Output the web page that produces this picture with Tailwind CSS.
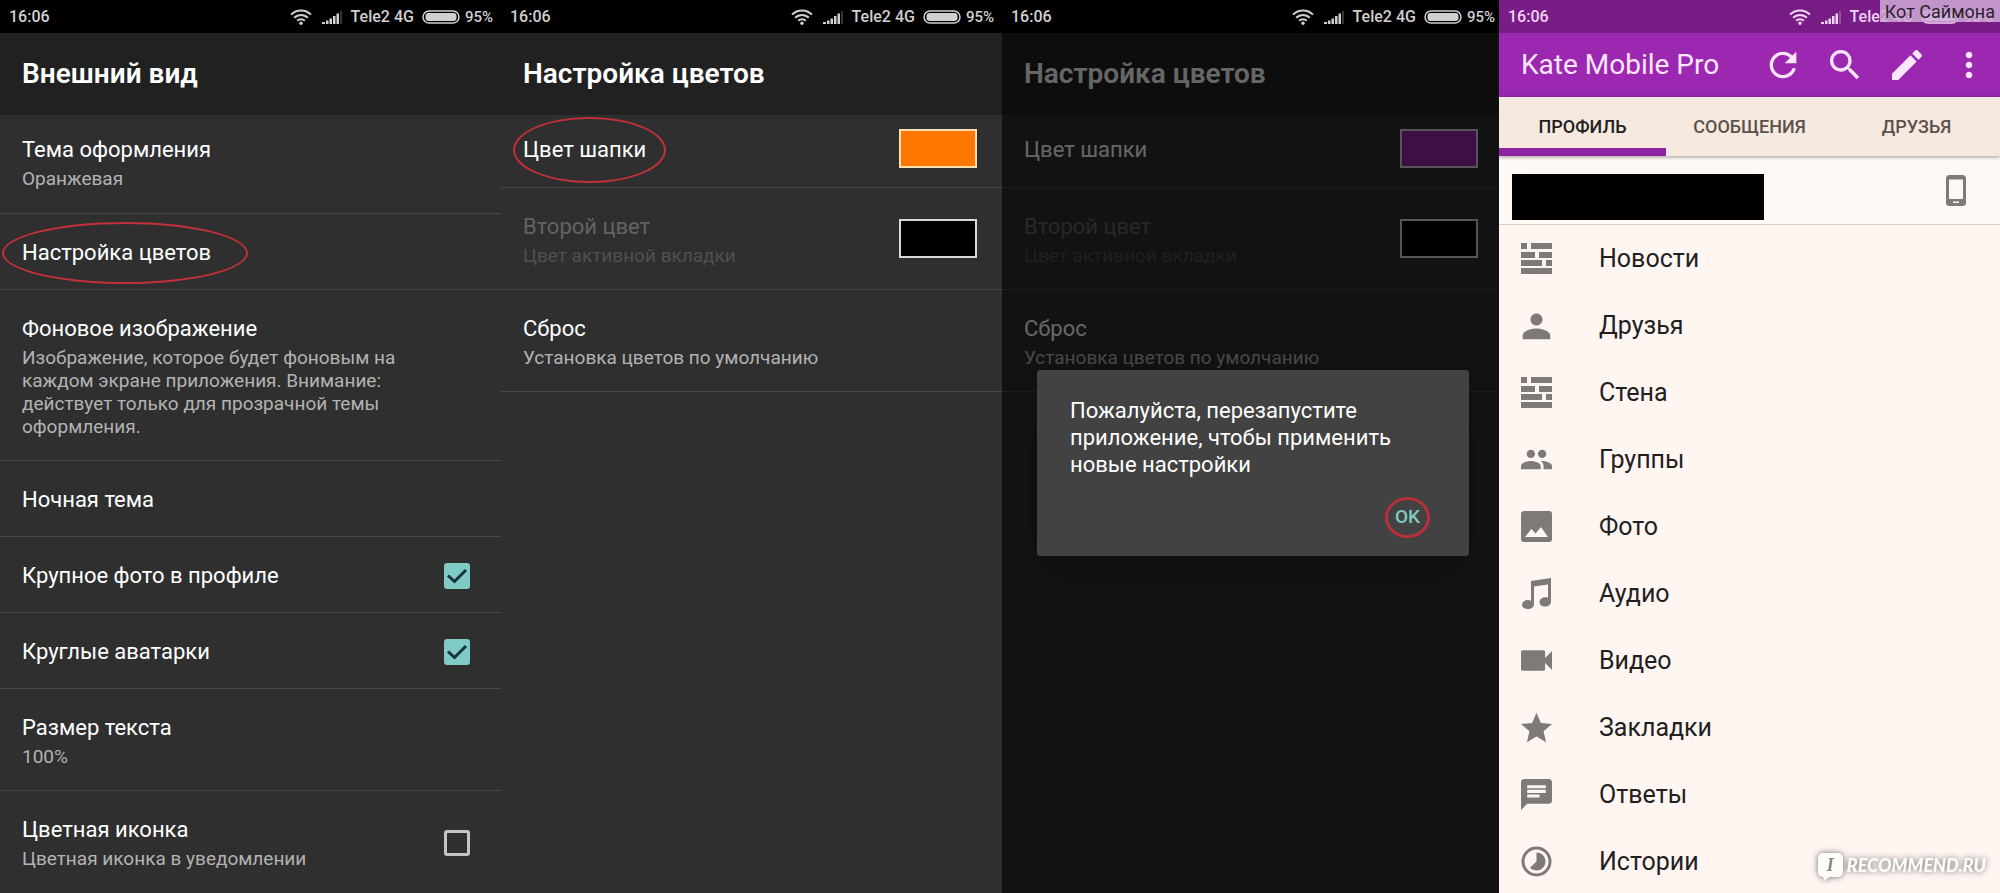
<!DOCTYPE html>
<html lang="ru">
<head>
  <meta charset="UTF-8" />
  <meta name="viewport" content="width=device-width, initial-scale=1" />
  <title>Kate Mobile Pro</title>
  <script src="https://cdn.jsdelivr.net/npm/@tailwindcss/browser@4"></script>
</head>
<body class="h-screen overflow-hidden bg-black font-[Roboto,sans-serif]">

<!-- shared icons -->
<svg class="hidden">
  <symbol id="wifi" viewBox="0 0 22 16">
    <g fill="none" stroke="currentColor" stroke-width="2">
      <path d="M1 5.6a14.2 14.2 0 0 1 20 0" />
      <path d="M4.2 8.8a9.6 9.6 0 0 1 13.6 0" />
      <path d="M7.2 11.8a5.4 5.4 0 0 1 7.6 0" />
    </g>
    <circle cx="11" cy="14.2" r="1.7" fill="currentColor" />
  </symbol>
  <symbol id="signal" viewBox="0 0 20 13">
    <g fill="currentColor">
      <path d="M0 11h3v2H0zM4 9.5h2.500V13H4zM7.500 7.500h2.500v5.500h-2.500zM11 5h2.500v8h-2.500zM14.500 2.500h2.500V13h-2.500z" />
      <path d="M18 0h2v13h-2z" opacity=".25" />
    </g>
  </symbol>
  <symbol id="battery" viewBox="0 0 38 14">
    <rect x="1" y="1" width="36" height="12" rx="6" fill="none" stroke="currentColor" stroke-width="1.500" />
    <rect x="3.500" y="3" width="31" height="8" rx="3" fill="currentColor" />
  </symbol>
  <symbol id="wall" viewBox="0 0 31 31">
    <path fill="currentColor" d="M0 0h6v6H0zM10 0h21v6H10zM0 9h14v6H0zM18 9h13v6H18zM0 17h21v6H0zM25 17h6v6h-6zM0 25h31v6H0z" />
  </symbol>
</svg>

<main class="grid h-full grid-cols-[501fr_501fr_497fr_501fr] text-white">

  <!-- appearance -->
  <section class="flex min-w-0 flex-col overflow-hidden bg-[#2f2f2f]">
    <div class="flex h-[33px] shrink-0 items-center bg-black pt-px pr-2 pl-[9px] text-base font-medium text-[#d0d0d0]">
      <span class="mr-auto">16:06</span>
      <svg class="mr-[10px] h-4 w-[22px]"><use href="#wifi" /></svg>
      <svg class="mr-[9px] h-[13px] w-5"><use href="#signal" /></svg>
      <span class="mr-2">Tele2 4G</span>
      <svg class="mr-[5px] h-[14px] w-[38px]"><use href="#battery" /></svg>
      <span class="text-[15px]">95%</span>
    </div>
    <header class="flex h-[82px] shrink-0 items-center bg-[#212121] px-[22px]">
      <h1 class="text-[28px] font-semibold">Внешний вид</h1>
    </header>
    <ul class="[&>li]:border-b [&>li]:border-[#484848] [&>li]:px-[22px] [&>li]:pt-[25px] [&>li]:pb-[22px] [&>li:last-child]:border-0">
      <li class="first:pt-[21px] first:pb-[23px]">
        <h2 class="text-[22px] leading-7">Тема оформления</h2>
        <p class="mt-[3px] text-[19px] leading-[23px] text-[#b3b3b3]">Оранжевая</p>
      </li>
      <li class="relative">
        <h2 class="text-[22px] leading-7">Настройка цветов</h2>
        <div class="absolute top-2 left-[2px] h-[62px] w-[246px] rounded-[50%] border-2 border-[#c3303a]"></div>
      </li>
      <li>
        <h2 class="text-[22px] leading-7">Фоновое изображение</h2>
        <p class="mt-[3px] max-w-[400px] text-[19px] leading-[23px] text-[#b3b3b3]">Изображение, которое будет фоновым на каждом экране приложения. Внимание: действует только для прозрачной темы оформления.</p>
      </li>
      <li>
        <h2 class="text-[22px] leading-7">Ночная тема</h2>
      </li>
      <li class="flex items-center justify-between">
        <label for="bigPhoto" class="text-[22px] leading-7">Крупное фото в профиле</label>
        <span class="relative mr-[9px] h-[26px] w-[26px]">
          <input type="checkbox" id="bigPhoto" checked class="block h-[26px] w-[26px] appearance-none rounded-[3px] border-2 border-[#c4c4c4] checked:border-[#80cbc4] checked:bg-[#80cbc4]">
          <svg class="pointer-events-none absolute inset-0" viewBox="0 0 26 26" fill="none" stroke="#17343a" stroke-width="3"><path d="M4 12.500l6.500 6L22 7" /></svg>
        </span>
      </li>
      <li class="flex items-center justify-between">
        <label for="roundAvatars" class="text-[22px] leading-7">Круглые аватарки</label>
        <span class="relative mr-[9px] h-[26px] w-[26px]">
          <input type="checkbox" id="roundAvatars" checked class="block h-[26px] w-[26px] appearance-none rounded-[3px] border-2 border-[#c4c4c4] checked:border-[#80cbc4] checked:bg-[#80cbc4]">
          <svg class="pointer-events-none absolute inset-0" viewBox="0 0 26 26" fill="none" stroke="#17343a" stroke-width="3"><path d="M4 12.500l6.500 6L22 7" /></svg>
        </span>
      </li>
      <li>
        <h2 class="text-[22px] leading-7">Размер текста</h2>
        <p class="mt-[3px] text-[19px] leading-[23px] text-[#b3b3b3]">100%</p>
      </li>
      <li class="flex items-center justify-between">
        <label for="colorIcon">
          <span class="block text-[22px] leading-7">Цветная иконка</span>
          <span class="mt-[3px] block text-[19px] leading-[23px] text-[#b3b3b3]">Цветная иконка в уведомлении</span>
        </label>
        <input type="checkbox" id="colorIcon" class="mr-[9px] block h-[26px] w-[26px] appearance-none rounded-[3px] border-[3px] border-[#c4c4c4] checked:bg-[#80cbc4]">
      </li>
    </ul>
  </section>

  <!-- colors -->
  <section class="flex min-w-0 flex-col overflow-hidden bg-[#2f2f2f]">
    <div class="flex h-[33px] shrink-0 items-center bg-black pt-px pr-2 pl-[9px] text-base font-medium text-[#d0d0d0]">
      <span class="mr-auto">16:06</span>
      <svg class="mr-[10px] h-4 w-[22px]"><use href="#wifi" /></svg>
      <svg class="mr-[9px] h-[13px] w-5"><use href="#signal" /></svg>
      <span class="mr-2">Tele2 4G</span>
      <svg class="mr-[5px] h-[14px] w-[38px]"><use href="#battery" /></svg>
      <span class="text-[15px]">95%</span>
    </div>
    <header class="flex h-[82px] shrink-0 items-center bg-[#212121] px-[22px]">
      <h1 class="text-[28px] font-semibold">Настройка цветов</h1>
    </header>
    <ul class="[&>li]:border-b [&>li]:border-[#484848] [&>li]:px-[22px] [&>li]:pt-[25px] [&>li]:pb-[22px]">
      <li class="relative flex items-center justify-between first:pt-[21px] first:pb-[23px]">
        <h2 class="text-[22px] leading-7">Цвет шапки</h2>
        <button type="button" aria-label="Цвет шапки" class="-mt-3 -mb-2 mr-[3px] h-[39px] w-[78px] border-2 border-[#ffe0b0] bg-[#ff7700]"></button>
        <div class="absolute top-[2px] left-3 h-[66px] w-[153px] rounded-[50%] border-2 border-[#c3303a]"></div>
      </li>
      <li class="flex items-center justify-between">
        <div>
          <h2 class="text-[22px] leading-7 text-[#636363]">Второй цвет</h2>
          <p class="mt-[3px] text-[19px] leading-[23px] text-[#505050]">Цвет активной вкладки</p>
        </div>
        <button type="button" aria-label="Второй цвет" class="mr-[3px] mb-1 h-[39px] w-[78px] border-2 border-[#d8d8d8] bg-black"></button>
      </li>
      <li>
        <h2 class="text-[22px] leading-7">Сброс</h2>
        <p class="mt-[3px] text-[19px] leading-[23px] text-[#b3b3b3]">Установка цветов по умолчанию</p>
      </li>
    </ul>
  </section>

  <!-- colors, restart dialog -->
  <section class="flex min-w-0 flex-col overflow-hidden bg-[#2f2f2f]">
    <div class="flex h-[33px] shrink-0 items-center bg-black pt-px pr-1 pl-[9px] text-base font-medium text-[#d0d0d0]">
      <span class="mr-auto">16:06</span>
      <svg class="mr-[10px] h-4 w-[22px]"><use href="#wifi" /></svg>
      <svg class="mr-[9px] h-[13px] w-5"><use href="#signal" /></svg>
      <span class="mr-2">Tele2 4G</span>
      <svg class="mr-[5px] h-[14px] w-[38px]"><use href="#battery" /></svg>
      <span class="text-[15px]">95%</span>
    </div>
    <div class="relative grow">
      <header class="flex h-[82px] items-center bg-[#212121] px-[22px]">
        <h1 class="text-[28px] font-semibold">Настройка цветов</h1>
      </header>
      <ul class="[&>li]:border-b [&>li]:border-[#484848] [&>li]:pt-[25px] [&>li]:pr-[18px] [&>li]:pb-[22px] [&>li]:pl-[22px]">
        <li class="flex items-center justify-between first:pt-[21px] first:pb-[23px]">
          <h2 class="text-[22px] leading-7">Цвет шапки</h2>
          <button type="button" aria-label="Цвет шапки" class="-mt-3 -mb-2 mr-[3px] h-[39px] w-[78px] border-2 border-[#d8d8d8] bg-[#9c27b0]"></button>
        </li>
        <li class="flex items-center justify-between">
          <div>
            <h2 class="text-[22px] leading-7 text-[#636363]">Второй цвет</h2>
            <p class="mt-[3px] text-[19px] leading-[23px] text-[#505050]">Цвет активной вкладки</p>
          </div>
          <button type="button" aria-label="Второй цвет" class="mr-[3px] mb-1 h-[39px] w-[78px] border-2 border-[#d8d8d8] bg-black"></button>
        </li>
        <li>
          <h2 class="text-[22px] leading-7">Сброс</h2>
          <p class="mt-[3px] text-[19px] leading-[23px] text-[#b3b3b3]">Установка цветов по умолчанию</p>
        </li>
      </ul>
      <div class="absolute inset-0 flex items-center bg-black/60 pr-[30px] pl-[35px]">
        <div role="dialog" class="w-full rounded-[3px] bg-[#424242] px-[33px] pt-[27px] pb-[18px] shadow-2xl">
          <p class="max-w-[340px] text-[22px] leading-[27px]">Пожалуйста, перезапустите приложение, чтобы применить новые настройки</p>
          <div class="mt-[19px] flex justify-end pr-[6px]">
            <button type="button" class="h-[41px] w-[45px] rounded-[50%] border-[3px] border-[#b8303a] text-[19px] font-medium text-[#80cbc4]">OK</button>
          </div>
        </div>
      </div>
    </div>
  </section>

  <!-- main screen -->
  <section class="relative flex min-w-0 flex-col overflow-hidden bg-[#fff6f2] text-[#22201e]">
    <div class="flex h-[33px] shrink-0 items-center bg-[#771d85] pt-px pr-2 pl-[9px] text-base font-medium text-[#f3d3f5]">
      <span class="mr-auto">16:06</span>
      <svg class="mr-[10px] h-4 w-[22px]"><use href="#wifi" /></svg>
      <svg class="mr-[9px] h-[13px] w-5"><use href="#signal" /></svg>
      <span class="mr-2">Tele2 4G</span>
      <svg class="mr-[5px] h-[14px] w-[38px]"><use href="#battery" /></svg>
      <span class="text-[15px]">95%</span>
    </div>
    <header class="flex h-16 shrink-0 items-center gap-[22px] bg-[#9c27b0] pr-[11px] pl-[22px] text-[#ffe6ff]">
      <h1 class="mr-auto text-[28px]">Kate Mobile Pro</h1>
      <button type="button" aria-label="Обновить" class="h-10 w-10">
        <svg viewBox="0 0 24 24" fill="currentColor"><path d="M17.650 6.350C16.200 4.900 14.210 4 12 4c-4.420 0-7.990 3.580-7.990 8s3.570 8 7.990 8c3.730 0 6.840-2.550 7.730-6h-2.080c-.82 2.330-3.040 4-5.650 4-3.310 0-6-2.690-6-6s2.690-6 6-6c1.660 0 3.140.69 4.220 1.780L13 11h7V4l-2.350 2.350z" /></svg>
      </button>
      <button type="button" aria-label="Поиск" class="h-10 w-10">
        <svg viewBox="0 0 24 24" fill="currentColor"><path d="M15.500 14h-.79l-.28-.27C15.410 12.590 16 11.110 16 9.500 16 5.910 13.090 3 9.500 3S3 5.910 3 9.500 5.910 16 9.500 16c1.610 0 3.090-.59 4.230-1.570l.27.28v.79l5 4.990L20.490 19l-4.990-5zm-6 0C7.010 14 5 11.990 5 9.500S7.010 5 9.500 5 14 7.010 14 9.500 11.990 14 9.500 14z" /></svg>
      </button>
      <button type="button" aria-label="Написать" class="h-10 w-10">
        <svg viewBox="0 0 24 24" fill="currentColor"><path d="M3 17.250V21h3.750L17.810 9.940l-3.750-3.750L3 17.250zM20.710 7.040c.39-.39.39-1.020 0-1.410l-2.340-2.340c-.39-.39-1.020-.39-1.410 0l-1.830 1.830 3.750 3.750 1.830-1.830z" /></svg>
      </button>
      <button type="button" aria-label="Ещё" class="h-10 w-10">
        <svg viewBox="0 0 24 24" fill="currentColor"><path d="M12 8c1.100 0 2-.9 2-2s-.9-2-2-2-2 .9-2 2 .9 2 2 2zm0 2c-1.100 0-2 .9-2 2s.9 2 2 2 2-.9 2-2-.9-2-2-2zm0 6c-1.100 0-2 .9-2 2s.9 2 2 2 2-.9 2-2-.9-2-2-2z" /></svg>
      </button>
    </header>
    <nav class="z-10 grid h-[59px] shrink-0 grid-cols-3 bg-[#f6e9e0] text-center text-[18px] leading-[59px] font-medium text-[#5c524c] shadow-[0_1px_4px_rgba(0,0,0,0.4)]">
      <a href="#" class="text-[#22201e] shadow-[inset_0_-8px_#8e24a2]">ПРОФИЛЬ</a>
      <a href="#">СООБЩЕНИЯ</a>
      <a href="#">ДРУЗЬЯ</a>
    </nav>
    <div class="flex h-[69px] shrink-0 items-center justify-between border-b border-[#dccfc9] bg-[#fff9f5] pr-[34px] pl-[13px]">
      <div class="mt-[14px] h-[46px] w-[252px] bg-black"></div>
      <svg class="h-[31px] w-5 text-[#7d7a77]" viewBox="0 0 20 31" fill="currentColor"><path fill-rule="evenodd" d="M3.500 0h13A3.500 3.500 0 0 1 20 3.500v24a3.500 3.500 0 0 1-3.500 3.500h-13A3.500 3.500 0 0 1 0 27.500v-24A3.500 3.500 0 0 1 3.500 0zM3 4.500V24h14V4.500zM7 26.500v1.500h6v-1.500z" /></svg>
    </div>
    <ul class="text-[25px] [&_a]:flex [&_a]:h-[67px] [&_a]:items-center [&_a]:gap-[47px] [&_a]:pl-[22px] [&_svg]:h-[31px] [&_svg]:w-[31px] [&_svg]:text-[#7d7a77]">
      <li><a href="#"><svg><use href="#wall" /></svg>Новости</a></li>
      <li><a href="#">
        <svg viewBox="3 3 18 18" fill="currentColor"><path d="M12 12c1.930 0 3.500-1.570 3.500-3.500S13.930 5 12 5 8.500 6.570 8.500 8.500 10.070 12 12 12zm0 1.700c-2.670 0-8 1.340-8 4V20h16v-2.300c0-2.660-5.330-4-8-4z" /></svg>Друзья</a></li>
      <li><a href="#"><svg><use href="#wall" /></svg>Стена</a></li>
      <li><a href="#">
        <svg viewBox="1 1 22 22" fill="currentColor"><path d="M16 11c1.660 0 2.990-1.340 2.990-3S17.660 5 16 5c-1.660 0-3 1.340-3 3s1.340 3 3 3zm-8 0c1.660 0 2.990-1.340 2.990-3S9.660 5 8 5C6.340 5 5 6.340 5 8s1.340 3 3 3zm0 2c-2.330 0-7 1.170-7 3.500V19h14v-2.500c0-2.330-4.670-3.500-7-3.500zm8 0c-.29 0-.62.020-.97.050 1.160.84 1.970 1.970 1.970 3.450V19h6v-2.500c0-2.330-4.670-3.500-7-3.500z" /></svg>Группы</a></li>
      <li><a href="#">
        <svg viewBox="0 0 31 31"><rect width="31" height="31" rx="3" fill="currentColor" /><path d="M4 26l6.500-8 4 4.500L20 16l7 10z" fill="#fff6f2" /></svg>Фото</a></li>
      <li><a href="#">
        <svg viewBox="0 0 31 31" fill="currentColor"><path d="M10 3L30 0v23.500c0 3-2.500 5-6 5s-5.500-1.800-5.500-4.300c0-3 2.700-5 6-5 1 0 1.800.1 2.500.5V6.500L13 8.500V26c0 3-2.700 5-6.200 5S1 29 1 26.700c0-2.700 2.700-4.700 5.800-4.700 1.200 0 2.300.2 3.200.7z" /></svg>Аудио</a></li>
      <li><a href="#">
        <svg viewBox="3 3 18 18" fill="currentColor"><path d="M17 10.500V7c0-.55-.45-1-1-1H4c-.55 0-1 .45-1 1v10c0 .55.45 1 1 1h12c.55 0 1-.45 1-1v-3.500l4 4v-11l-4 4z" /></svg>Видео</a></li>
      <li><a href="#">
        <svg viewBox="2 2 20 19" fill="currentColor"><path d="M12 17.270L18.180 21l-1.640-7.030L22 9.240l-7.190-.61L12 2 9.190 8.630 2 9.240l5.460 4.730L5.820 21z" /></svg>Закладки</a></li>
      <li><a href="#">
        <svg viewBox="2 2 20 20" fill="currentColor"><path d="M20 2H4c-1.100 0-1.990.9-1.990 2L2 22l4-4h14c1.100 0 2-.9 2-2V4c0-1.100-.9-2-2-2zM6 9h12v2H6V9zm8 5H6v-2h8v2zm4-6H6V6h12v2z" /></svg>Ответы</a></li>
      <li><a href="#">
        <svg viewBox="0 0 31 31"><circle cx="15.500" cy="15.500" r="13.500" fill="none" stroke="currentColor" stroke-width="3" /><path d="M15.500 6.500a9 9 0 1 1-6.500 15.200l6.500-6.200z" fill="currentColor" /></svg>Истории</a></li>
    </ul>

    <!-- watermarks -->
    <div class="absolute top-0 right-0 h-[22px] bg-[#cfaad6]/85 px-[5px] text-[18px] leading-6 text-[#2a1f2c]">Кот Саймона</div>
    <div class="absolute right-[14px] bottom-4 flex items-center gap-1 drop-shadow-[0_0_3px_#6f6a66]">
      <div class="relative h-6 w-[25px] rounded-[5px] bg-[#fffdfa] text-center font-['Liberation_Serif',serif] text-[18px] leading-6 font-bold text-[#8a8783] italic">I
        <svg class="absolute top-[22px] left-[5px] h-[6px] w-[9px]" viewBox="0 0 9 6"><path d="M0 0h9L1 6z" fill="#fffdfa" /></svg>
      </div>
      <span class="font-[Lato,sans-serif] text-[18px] leading-6 font-black text-[#fffdfa] italic">RECOMMEND.RU</span>
    </div>
  </section>
</main>

</body>
</html>
